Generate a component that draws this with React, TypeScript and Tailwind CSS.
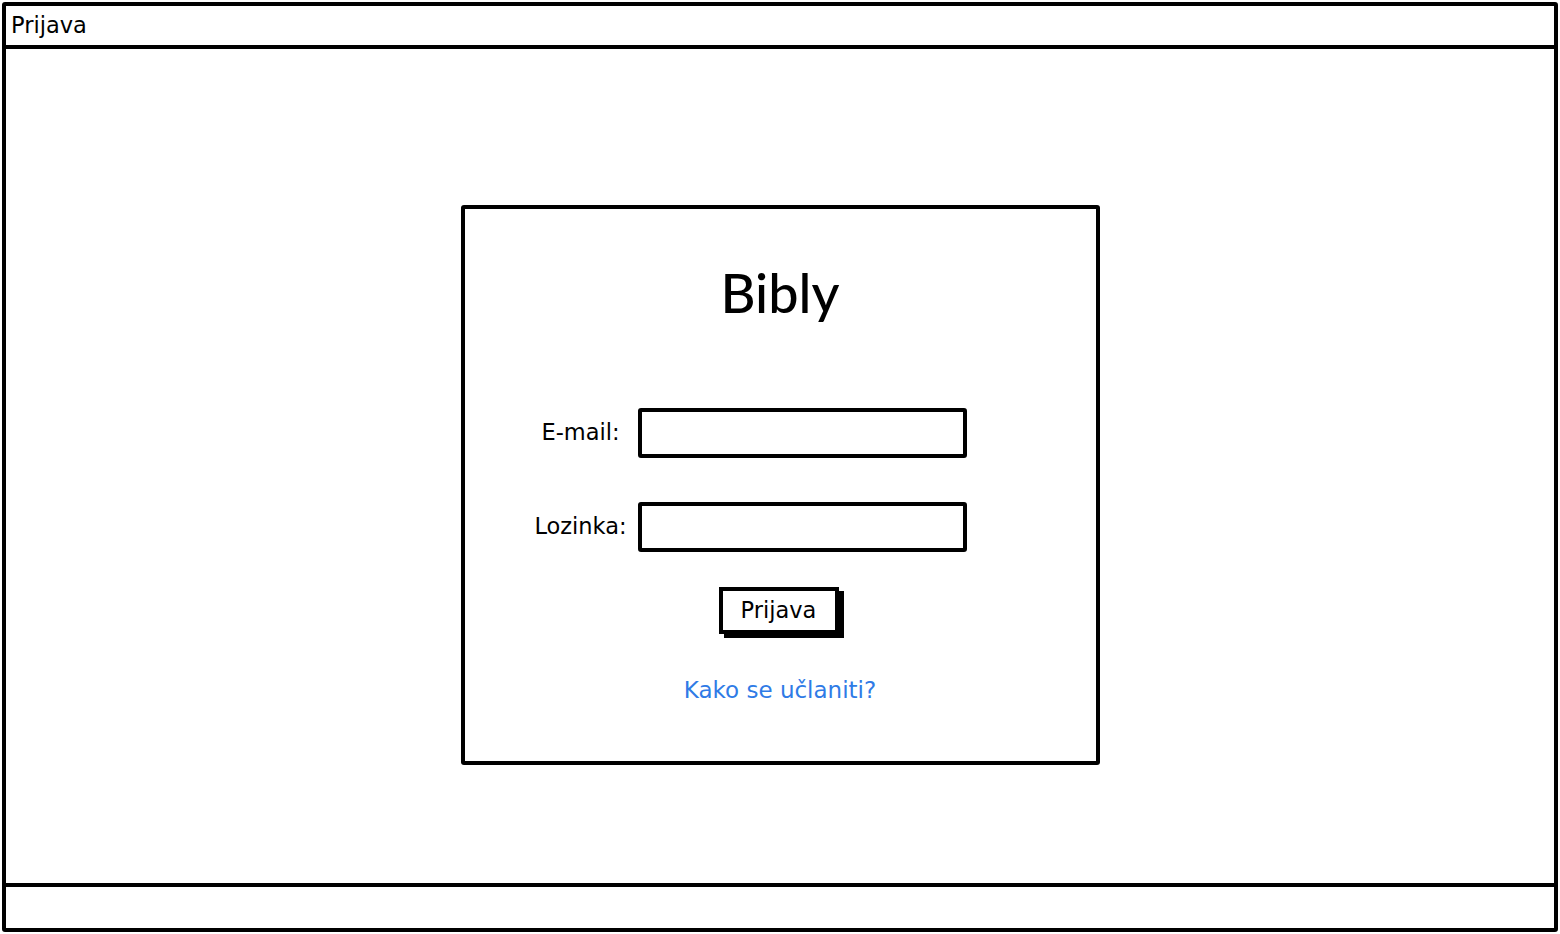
export default function App() {
  return (
    <div className="h-[934px] w-[1560px] bg-white p-[2px] text-black [font-family:'DejaVu_Sans',Lato,sans-serif]">
      <div className="flex h-full flex-col border-[4px] border-black rounded-[3px]">
        {/* title bar */}
        <div className="flex h-[43px] items-center border-b-[4px] border-black pl-[5px]">
          <span className="text-[22.5px] leading-none">Prijava</span>
        </div>

        {/* content */}
        <div className="flex-1 pt-[156px]">
          <div className="mx-auto flex h-[560px] w-[639px] flex-col items-center border-[4px] border-black rounded-[3px]">
            <h1 className="mt-[57px] text-[54px] leading-none font-medium [font-family:Lato,sans-serif]">Bibly</h1>

            <div className="mt-[88px] ml-[61px] flex flex-col gap-[44px] self-start">
              <div className="flex items-center">
                <label className="w-[110px] text-center text-[22.5px]">E-mail:</label>
                <div className="ml-[2px] h-[50px] w-[329px] border-[4px] border-black rounded-[3px]" />
              </div>
              <div className="flex items-center">
                <label className="w-[110px] text-center text-[22.5px]">Lozinka:</label>
                <div className="ml-[2px] h-[50px] w-[329px] border-[4px] border-black rounded-[3px]" />
              </div>
            </div>

            <button className="mt-[35px] mr-[3px] flex h-[47px] w-[120px] items-center justify-center border-[4px] border-black bg-white text-[22.5px] shadow-[5px_4px_0_0_#000]">
              Prijava
            </button>

            <a className="mt-[43px] text-[23px] leading-[27px] text-[#2f7be6]">Kako se učlaniti?</a>
          </div>
        </div>

        {/* footer */}
        <div className="h-[45px] border-t-[4px] border-black" />
      </div>
    </div>
  );
}
